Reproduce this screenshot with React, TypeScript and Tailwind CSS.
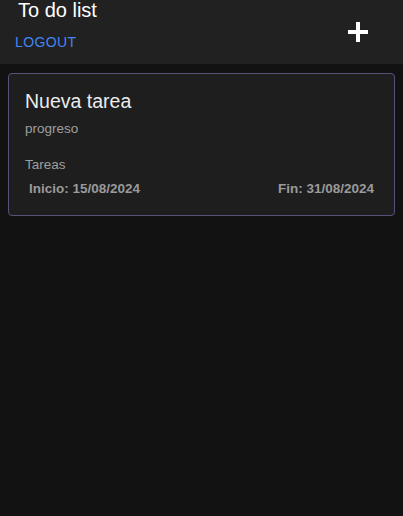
export default function App() {
  const task = {
    title: "Nueva tarea",
    status: "progreso",
    category: "Tareas",
    start: "15/08/2024",
    end: "31/08/2024",
  };

  return (
    <div className="min-h-[516px] bg-[#121212] font-['Liberation_Sans',Arial,sans-serif]">
      {/* Header */}
      <header className="h-[64px] bg-[#212121] flex items-center justify-between pr-[35px]">
        <div className="self-start">
          <h1 className="pl-[18px] text-[20px] leading-[20px] text-white">To do list</h1>
          <button className="mt-[14px] pl-[15px] text-[14px] leading-[16px] tracking-[0.4px] text-[#4285f4]">
            LOGOUT
          </button>
        </div>
        <button aria-label="add" className="w-5 h-5">
          <svg viewBox="0 0 20 20" className="w-5 h-5">
            <rect x="8" y="0" width="4" height="20" fill="#fff" />
            <rect x="0" y="8" width="20" height="4" fill="#fff" />
          </svg>
        </button>
      </header>

      {/* Task list */}
      <main className="px-2 pt-[9px]">
        <div className="rounded border border-[#57527a] bg-[#1e1e1e] p-4">
          <h2 className="text-[19.5px] leading-[23px] text-[#ececec]">{task.title}</h2>
          <p className="mt-[6px] text-[13.5px] leading-[20px] text-[#9e9e9e]">{task.status}</p>
          <p className="mt-4 text-[13.5px] leading-[20px] text-[#9e9e9e]">{task.category}</p>
          <div className="mt-1 px-1 flex justify-between text-[13.5px] leading-[20px] font-bold text-[#9a9a9a]">
            <span>Inicio: {task.start}</span>
            <span>Fin: {task.end}</span>
          </div>
        </div>
      </main>
    </div>
  );
}
